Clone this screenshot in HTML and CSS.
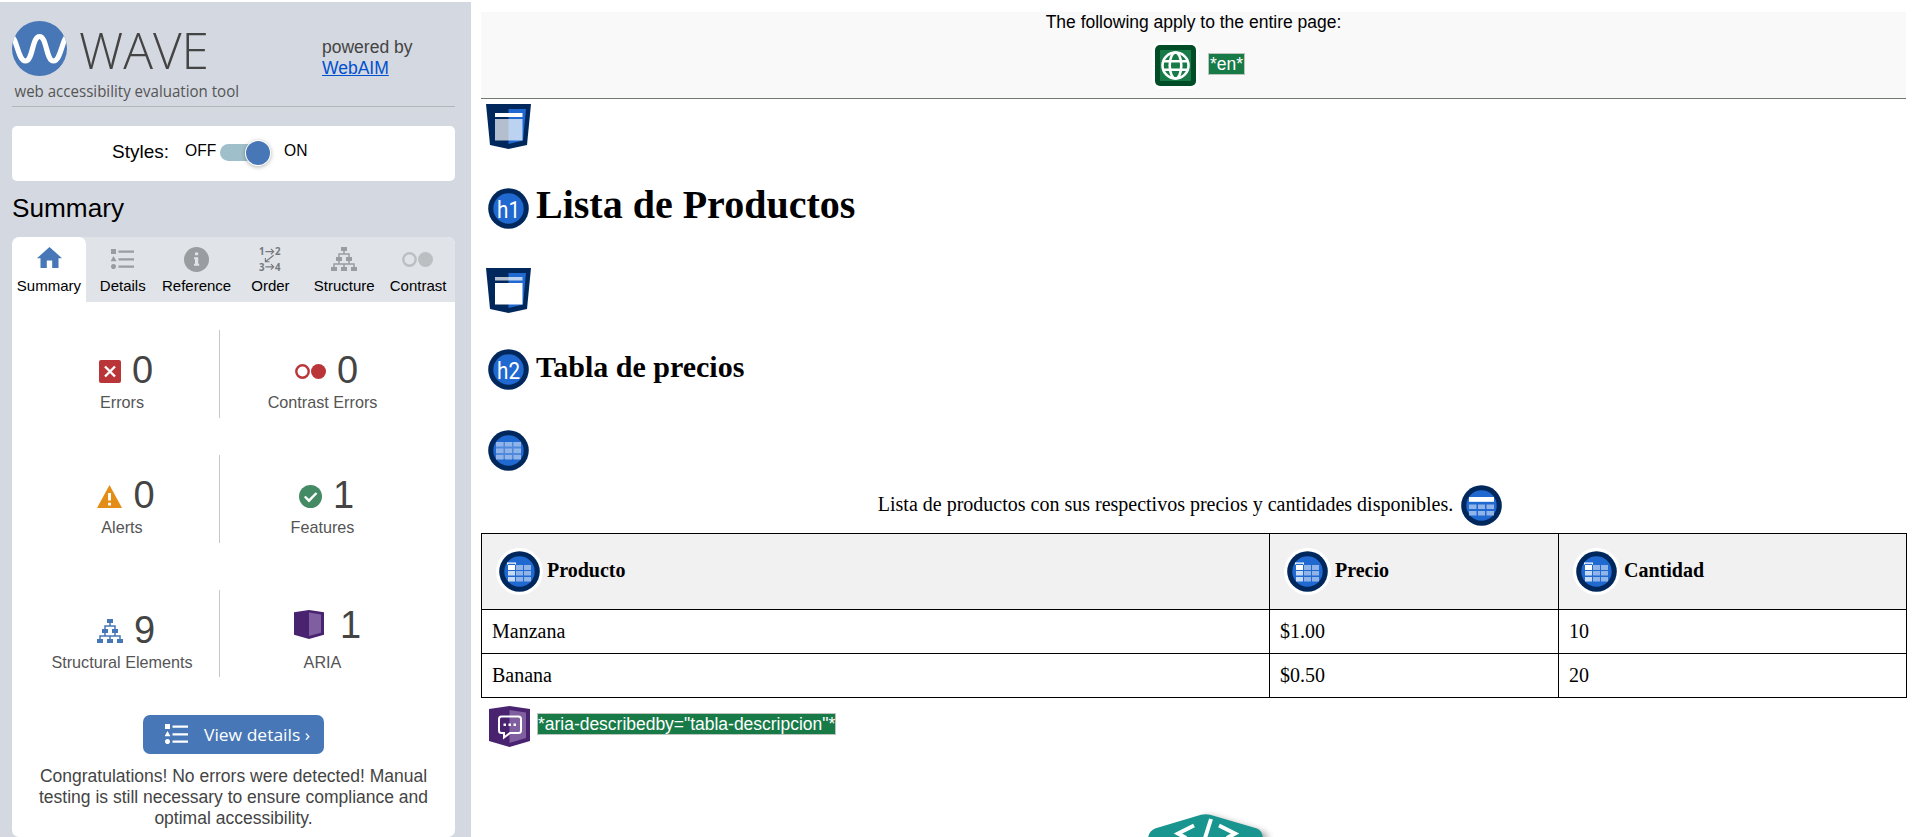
FILE: index.html
```html
<!DOCTYPE html>
<html lang="en">
<head>
<meta charset="utf-8">
<title>WAVE - Lista de Productos</title>
<link rel="stylesheet" href="styles.css">
</head>
<body>
<svg class="defs" width="0" height="0" aria-hidden="true">
  <symbol id="list" viewBox="0 0 23 20">
    <path d="M0 0h5v5H0zM2.500 7l3 5.300h-6zM7.500 1.600h15.500v2.200H7.500zM7.500 9.200h15.500v2.200H7.500zM7.500 16.500h15.500v2.200H7.500z"/>
    <circle cx="2.500" cy="17.600" r="2.500"/>
  </symbol>
  <symbol id="tree" viewBox="0 0 26 24">
    <path d="M10 0h6v4h-6zM5 10h6v4H5zM15 10h6v4h-6zM0 20h6v4H0zM10 20h6v4h-6zM20 20h6v4h-6z"/>
    <path d="M13 4v3M8 10V7h10v3M8 14v3M18 14v3M3 20v-3h20v3M13 17v3" fill="none" stroke="currentColor" stroke-width="1.500"/>
  </symbol>
  <symbol id="circles" viewBox="0 0 31 15">
    <circle cx="7.500" cy="7.500" r="6.200" fill="none" stroke="currentColor" stroke-width="2.400"/>
    <circle cx="23.500" cy="7.500" r="7.500"/>
  </symbol>
  <symbol id="shield" viewBox="0 0 45 45">
    <path d="M0 0h45l-4 41-18.500 4L4 41z" fill="#00285c"/>
    <path d="M22.500 5H40l-3 31.500-14.500 3.500z" fill="#2069d0"/>
  </symbol>
  <symbol id="disc" viewBox="0 0 41 41">
    <circle cx="20.500" cy="20.500" r="20.300" fill="#00285c"/>
    <circle cx="20.500" cy="20.500" r="15.200" fill="#2069d0"/>
  </symbol>
  <symbol id="th" viewBox="0 0 47 47">
    <circle cx="23.500" cy="23.500" r="23.500" fill="#fff"/>
    <use href="#disc" x="3" y="3" width="41" height="41"/>
    <path d="M20 17h7v5h-7zM28 17h7v5h-7zM20 23h7v4.500h-7zM28 23h7v4.500h-7zM20 29h7v4.500h-7zM28 29h7v4.500h-7z" fill="#90b4e8"/>
    <path d="M12 23h7v4.500h-7zM12 29h7v4.500h-7z" fill="#c7daf3"/>
    <path d="M12 17h7v5h-7zM11 14.600h9v2h-1v-.8h-7v.8h-1z" fill="#fff"/>
  </symbol>
</svg>

<div class="app">
  <aside class="sidebar">
    <header class="brand">
      <svg class="logo" width="232" height="84" viewBox="0 0 232 84">
        <clipPath id="logo-clip"><circle cx="27.500" cy="27.500" r="27.500"/></clipPath>
        <circle cx="27.500" cy="27.500" r="27.500" fill="#4777b6"/>
        <path clip-path="url(#logo-clip)" d="M-1 15C5 17 6 40 13.500 40S20 15.500 27.500 15.500 34 40 41.500 40 50 17 56 15" fill="none" stroke="#fff" stroke-width="5.200"/>
        <text class="logo-word" x="67" y="47.500" textLength="130" lengthAdjust="spacingAndGlyphs">WAVE</text>
        <text class="logo-tag" x="2.500" y="75.500" textLength="224.500" lengthAdjust="spacingAndGlyphs">web accessibility evaluation tool</text>
      </svg>
      <div class="powered">powered by<br><a href="#">WebAIM</a></div>
    </header>

    <div class="styles-box">
      <span class="styles-label">Styles:</span>
      <span class="off">OFF</span>
      <span class="switch"><span class="knob"></span></span>
      <span class="on">ON</span>
    </div>

    <h2 class="title">Summary</h2>

    <section class="panel">
      <nav class="tabs">
        <a class="tab active"><span class="tab-icon"><svg width="25" height="21" viewBox="0 0 25 21"><path d="M12.500 0L25 11.200h-3.500V21h-6.300v-7.500h-5.400V21H3.500v-9.800H0z"/></svg></span>Summary</a>
        <a class="tab"><span class="tab-icon"><svg width="23" height="20"><use href="#list"/></svg></span>Details</a>
        <a class="tab"><span class="tab-icon"><svg width="25" height="25" viewBox="0 0 25 25"><circle cx="12.500" cy="12.500" r="12.500"/><path d="M11 5.500h3.200v2.800H11zM10 10.200h4.200v6.600h1v2H10v-2h1v-4.600h-1z" fill="#e0e3e8"/></svg></span>Reference</a>
        <a class="tab"><span class="tab-icon"><svg width="24" height="26" viewBox="0 0 26 26"><text class="order-num" x="1" y="8.500">1</text><text class="order-num" x="18.500" y="8.500">2</text><text class="order-num" x="1" y="25.500">3</text><text class="order-num" x="18.500" y="25.500">4</text><path d="M8 5h9M14 2l3 3-3 3M8 21.500h9M14 18.500l3 3-3 3M17 9l-9 7M8 11.800V16h4.500" fill="none" stroke="#75787c" stroke-width="1.200"/></svg></span>Order</a>
        <a class="tab"><span class="tab-icon"><svg width="26" height="24"><use href="#tree"/></svg></span>Structure</a>
        <a class="tab"><span class="tab-icon pale"><svg width="31" height="15"><use href="#circles"/></svg></span>Contrast</a>
      </nav>

      <div class="stats">
        <div class="stat left"><div class="count red"><svg width="22" height="23" viewBox="0 0 22 23"><rect width="22" height="23" rx="2"/><path d="M6 6.500l10 10M16 6.500l-10 10" stroke="#fff" stroke-width="2.400"/></svg><b>0</b></div><span>Errors</span></div>
        <div class="stat"><div class="count red"><svg width="31" height="15"><use href="#circles"/></svg><b>0</b></div><span>Contrast Errors</span></div>
        <div class="stat left"><div class="count orange"><svg width="25" height="23" viewBox="0 0 25 23"><path d="M12.500 0L25 23H0z"/><path d="M11.100 8h2.900v7.500h-2.900zM11.100 17.800h2.900v2.800h-2.900z" fill="#fff"/></svg><b>0</b></div><span>Alerts</span></div>
        <div class="stat"><div class="count green"><svg width="23" height="23" viewBox="0 0 23 23"><circle cx="11.500" cy="11.500" r="11.500"/><path d="M5.800 11.500l4.200 4.200 7.500-7.700" fill="none" stroke="#fff" stroke-width="2.400"/></svg><b>1</b></div><span>Features</span></div>
        <div class="stat left"><div class="count blue"><svg width="26" height="24"><use href="#tree"/></svg><b>9</b></div><span>Structural Elements</span></div>
        <div class="stat"><div class="count aria"><svg width="30" height="29" viewBox="0 0 30 29"><path d="M0 2.200L15 0l15 2.200v22.500L15 29 0 24.700z" fill="#49236f"/><path d="M15 2.500l12 2v18.300L15 26z" fill="#7f5f9f"/></svg><b>1</b></div><span>ARIA</span></div>
      </div>

      <button class="details-btn"><svg width="23" height="20"><use href="#list"/></svg><svg class="btn-text" width="108" height="26"><text x="0" y="18.500" textLength="106" lengthAdjust="spacingAndGlyphs">View details ›</text></svg></button>
      <p class="message">Congratulations! No errors were detected! Manual<br>testing is still necessary to ensure compliance and<br>optimal accessibility.</p>
    </section>
  </aside>

  <main class="page">
    <div class="page-wide">
      <div>The following apply to the entire page:</div>
      <div class="lang">
        <svg width="47" height="47" viewBox="0 0 47 47"><rect width="47" height="47" rx="8" fill="#fff"/><rect x="3" y="3" width="41" height="41" rx="5" fill="#004d28"/><rect x="8" y="8" width="31" height="31" fill="#177a47"/><g fill="none" stroke="#fff" stroke-width="2.600"><circle cx="23.500" cy="23.500" r="13"/><ellipse cx="23.500" cy="23.500" rx="5.800" ry="13"/><path d="M11 19.300h25M11 27.700h25"/></g></svg>
        <span class="tag">*en*</span>
      </div>
    </div>

    <div class="landmark">
      <svg width="45" height="45" viewBox="0 0 45 45"><use href="#shield"/><path d="M9 9h27.500v4H9z" fill="#fff"/><path d="M9 15h27.500v21.500H9z" fill="#fff" fill-opacity=".7"/></svg>
    </div>

    <h1><svg width="41" height="41"><use href="#disc"/><text class="badge" x="9" y="29.500" textLength="23" lengthAdjust="spacingAndGlyphs">h1</text></svg>Lista de Productos</h1>

    <div class="landmark">
      <svg width="45" height="45" viewBox="0 0 45 45"><use href="#shield"/><path d="M9 9h27.500v3.500H9z" fill="#fff" fill-opacity=".7"/><path d="M9 15h27.500v21.500H9z" fill="#fff"/></svg>
    </div>

    <h2><svg width="41" height="41"><use href="#disc"/><text class="badge" x="9" y="29.500" textLength="23" lengthAdjust="spacingAndGlyphs">h2</text></svg>Tabla de precios</h2>

    <div class="table-mark">
      <svg width="41" height="41" viewBox="0 0 41 41"><use href="#disc"/><path d="M8 12h25v17H8z" fill="#5089dc"/><path d="M8 12h7.500v4.500H8zM17 12h7v4.500h-7zM25.500 12H33v4.500h-7.500zM8 18.500h7.500V23H8zM17 18.500h7V23h-7zM25.500 18.500H33V23h-7.500zM8 25h7.500v4.500H8zM17 25h7v4.500h-7zM25.500 25H33v4.500h-7.500z" fill="#90b4e8"/></svg>
    </div>

    <table>
      <caption><div class="caption">Lista de productos con sus respectivos precios y cantidades disponibles.<svg width="41" height="41" viewBox="0 0 41 41"><use href="#disc"/><path d="M8 12h25v4.800H8z" fill="#fff"/><path d="M8 19.500h7.500V24H8zM17 19.500h7V24h-7zM25.500 19.500H33V24h-7.500zM8 26h7.500v4.500H8zM17 26h7v4.500h-7zM25.500 26H33v4.500h-7.500z" fill="#90b4e8"/></svg></div></caption>
      <colgroup><col class="c1"><col class="c2"><col class="c3"></colgroup>
      <thead><tr>
        <th><div><svg width="47" height="47"><use href="#th"/></svg><span>Producto</span></div></th>
        <th><div><svg width="47" height="47"><use href="#th"/></svg><span>Precio</span></div></th>
        <th><div><svg width="47" height="47"><use href="#th"/></svg><span>Cantidad</span></div></th>
      </tr></thead>
      <tbody>
        <tr><td>Manzana</td><td>$1.00</td><td>10</td></tr>
        <tr><td>Banana</td><td>$0.50</td><td>20</td></tr>
      </tbody>
    </table>

    <div class="described">
      <svg width="41" height="41" viewBox="0 0 41 41"><path d="M0 3L20.500 0 41 3v32L20.500 41 0 35z" fill="#49236f"/><path d="M20.500 4L37 6.500v25.500L20.500 37z" fill="#7f5f9f"/><path d="M12.500 10.500h17q2.500 0 2.500 2.500v11.500q0 2.500-2.500 2.500H21l-6 4.500V27h-2.500q-2.500 0-2.500-2.500V13q0-2.500 2.500-2.500z" fill="none" stroke="#fff" stroke-width="2"/><path d="M14.500 17.500h2.500v2.500h-2.500zM19.500 17.500H22v2.500h-2.500zM24.500 17.500H27v2.500h-2.500z" fill="#fff"/></svg>
      <span class="tag">*aria-describedby="tabla-descripcion"*</span>
    </div>

    <div class="code-tab">
      <svg width="130" height="24" viewBox="0 0 130 24"><defs><filter id="soft" x="-20%" y="-20%" width="140%" height="160%"><feGaussianBlur stdDeviation="3.500"/></filter></defs><path d="M65 2L118 18q6 2 6 9H20z" fill="#000" opacity=".4" filter="url(#soft)"/><path d="M57 .8q4.500-1.300 9 0L113 14.500q5 2 6 9.500H4q1-7 7-9.500z" fill="#17958e"/><path d="M50 11.500L34 19.500 42 24M67 5l-6 19M75 11.500l16 8-8 4.500" fill="none" stroke="#fff" stroke-width="4"/></svg>
    </div>
  </main>
</div>
</body>
</html>
```

FILE: styles.css
```css
* { box-sizing: border-box; }
body { margin: 0; background: #fff; font-family: "Liberation Sans", Arial, sans-serif; font-size: 17.5px; overflow: hidden; }
svg { display: block; flex: none; overflow: visible; fill: currentColor; }
.defs { position: absolute; }
.app { display: flex; height: 837px; padding-top: 2px; }

.sidebar { width: 471px; flex: none; padding: 0 16px 0 12px; background: #d4d8e0; overflow: hidden; }
.brand { display: flex; height: 105px; padding-top: 19px; border-bottom: 1px solid #b2b6b8; color: #444; }
.logo-word { font: 300 50px "Open Sans", "Noto Sans", sans-serif; fill: #444; }
.logo-tag { font: 15.5px "Open Sans", "Noto Sans", sans-serif; fill: #555; }
.powered { margin-left: 78px; padding-top: 16px; line-height: 21px; }
.powered a { color: #0050d0; }

.styles-box { display: flex; height: 55px; margin-top: 19px; padding: 15px 0 0 100px; background: #fff; border-radius: 5px; color: #000; line-height: 21px; }
.styles-label { width: 73px; font-size: 19px; }
.off, .on { font-size: 15.6px; line-height: 19px; }
.off { width: 35px; }
.switch { display: flex; justify-content: flex-end; align-items: center; width: 48px; height: 17px; margin-top: 3px; background: #9fc0ca; border-radius: 9px; }
.knob { flex: none; width: 24px; height: 24px; margin-right: -2px; border-radius: 50%; background: #4777b6; box-shadow: 0 0 0 1px #fff, 0 1px 4px 1px rgba(0, 0, 0, .3); }
.on { margin-left: 16px; }

.title { margin: 0; height: 56px; padding-top: 12px; font-size: 26.2px; font-weight: 400; line-height: 30px; }
.panel { height: 600px; background: #fff; border-radius: 7px; overflow: hidden; }
.tabs { display: grid; grid-template-columns: repeat(6, 1fr); height: 65px; background: #e0e3e8; }
.tab { display: flex; flex-direction: column; align-items: center; font-size: 15px; line-height: 18px; }
.tab-icon { display: flex; align-items: center; height: 40px; padding-top: 4px; color: #9a9d9f; }
.tab.active { background: #fff; border-radius: 7px 7px 0 0; }
.active .tab-icon { color: #4777b6; padding: 0 0 0 1px; }
.tab-icon.pale { color: #bcbfc2; padding-right: 2px; }
.order-num { font: 700 10.500px "Open Sans", sans-serif; fill: #75787c; }

.stats { display: grid; grid-template-columns: 195px 205px; grid-template-rows: 125px 135px 87px; margin: 28px 0 0 13px; }
.stat { height: 88px; padding-top: 17px; text-align: center; font-size: 16.2px; color: #555; }
.stat:nth-child(n+5) { height: 87px; }
.stat.left { border-right: 1px solid #c6c6c6; }
.stat > span { display: block; line-height: 18px; }
.count { display: flex; justify-content: center; align-items: center; gap: 11px; height: 46px; padding-left: 8px; }
.count svg { margin-top: 2px; }
.count b { color: #444; font-weight: 400; font-size: 38px; line-height: 46px; }
.red { color: #b93538; }
.orange { color: #e38d17; }
.green { color: #448a64; }
.blue { color: #4777b6; }
.count.aria { gap: 16px; height: 36px; margin-bottom: 10px; padding-left: 10px; }
.aria svg { margin-top: -1px; }

.details-btn { display: flex; align-items: center; width: 181px; height: 39px; margin: 38px auto 0 131px; padding: 0 0 0 22px; gap: 16px; border: 0; border-radius: 7px; background: #4777b6; color: #fff; }
.details-btn svg:first-child { margin-top: -2px; }
.btn-text { font: 17px "Open Sans", "Noto Sans", sans-serif; }
.message { margin: 12px 0 0; color: #444; line-height: 21px; text-align: center; }

.page { flex: 1; padding: 10px 9px 0 10px; overflow: hidden; }
.page-wide { height: 87px; background: #f9f9f9; border-bottom: 1px solid #6f7c6f; text-align: center; line-height: 20px; }
.lang { display: flex; justify-content: center; align-items: center; gap: 9px; padding: 10px 0 0 10px; }
.tag { margin-top: -4px; padding: 0 1px; border: 1px solid #bbc5bd; background: #177a47; color: #fff; line-height: 20px; white-space: nowrap; }
.landmark { padding: 5px 0 0 5px; height: 55px; }
h1, .page h2 { display: flex; align-items: center; gap: 7px; margin: 0; padding-left: 7px; font-family: "Liberation Serif", "Times New Roman", serif; }
h1 { height: 109px; padding-bottom: 9px; font-size: 40px; }
h1 svg { margin-top: 9px; }
.page h2 { height: 90px; padding-top: 8px; font-size: 30px; }
.page h2 svg { margin-top: 5px; }
.badge { font: 400 24px Roboto, sans-serif; fill: #fff; }
.table-mark { padding: 22px 0 0 7px; height: 70px; }

table { width: 1425px; table-layout: fixed; border-collapse: collapse; font: 20px "Liberation Serif", "Times New Roman", serif; }
.c1 { width: 788px; }
.c2 { width: 289px; }
.c3 { width: 348px; }
.caption { display: flex; justify-content: center; align-items: center; height: 55px; padding: 0 8px 3px 0; gap: 8px; }
.caption svg { margin-top: 3px; }
th, td { border: 1px solid #000; text-align: left; padding: 0 10px; }
th { height: 76px; background: #f1f1f1; }
th div { display: flex; align-items: center; padding-left: 4px; gap: 4px; }
th span { margin-top: -3px; }
td { height: 44px; }

.described { display: flex; align-items: center; height: 56px; padding-left: 8px; gap: 7px; }
.described .tag { padding: 0; letter-spacing: -.02px; }
.code-tab { padding: 60px 0 0 663px; }
```
